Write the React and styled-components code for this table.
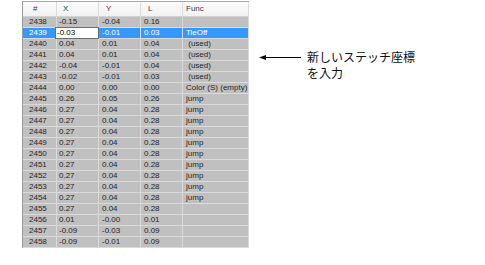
import React from "react";
import styled, { createGlobalStyle } from "styled-components";

const Global = createGlobalStyle`
  html, body { margin: 0; padding: 0; background: #ffffff; }
  body { font-family: "Liberation Sans", Arial, sans-serif; }
`;

const Page = styled.div`
  display: flex;
  align-items: flex-start;
  padding: 1px 0 0 22px;
`;

const Grid = styled.div`
  display: grid;
  grid-template-columns: 34px 42px 42px 42px 66px;
  border-left: 1px solid #9a9a9a;
  border-top: 1px solid #a8a8a8;
  font-size: 8px;
  flex: none;
`;

const HeadCell = styled.div`
  box-sizing: border-box;
  height: 15px;
  line-height: 14px;
  padding-left: ${(p) => p.$pad}px;
  background: linear-gradient(#fbfbfb, #f1f1f1);
  border-right: 1px solid #dcdcdc;
  border-bottom: 1px solid #d2d2d2;
  color: #3a3a3a;
  white-space: pre;
`;

const Cell = styled.div`
  box-sizing: border-box;
  height: 11px;
  line-height: 10px;
  padding-left: ${(p) => p.$pad}px;
  background: ${(p) => (p.$sel ? "#3399ff" : "#c0c0c0")};
  color: ${(p) => (p.$sel ? "#ffffff" : "#262626")};
  border-right: 1px solid #dadada;
  border-bottom: 1px solid #dadada;
  white-space: pre;
  overflow: visible;
`;

const Editor = styled.div`
  box-sizing: border-box;
  width: 44px;
  height: 12px;
  margin: -1px 0 0 -2px;
  padding-left: 1px;
  line-height: 10px;
  background: #ffffff;
  border: 1px solid #6e6e6e;
  color: #000000;
  position: relative;
`;

const Callout = styled.div`
  display: flex;
  align-items: flex-start;
  gap: 6px;
  margin: 48px 0 0 10px;
`;

const Arrow = styled.svg`
  display: block;
  margin-top: 5px;
  flex: none;
`;

const Note = styled.div`
  font-family: "Noto Sans CJK JP", "Noto Sans", sans-serif;
  font-size: 12px;
  line-height: 16px;
  color: #111111;
`;

const cols = [
  { key: "n", head: "#", hp: 10, bp: 6 },
  { key: "x", head: "X", hp: 6, bp: 2 },
  { key: "y", head: "Y", hp: 7, bp: 3 },
  { key: "l", head: "L", hp: 7, bp: 3 },
  { key: "f", head: "Func", hp: 3, bp: 3 },
];

const rows = [
  ["2438", "-0.15", "-0.04", "0.16", ""],
  ["2439", "-0.03", "-0.01", "0.03", "TieOff"],
  ["2440", "0.04", "0.01", "0.04", " (used)"],
  ["2441", "0.04", "0.01", "0.04", " (used)"],
  ["2442", "-0.04", "-0.01", "0.04", " (used)"],
  ["2443", "-0.02", "-0.01", "0.03", " (used)"],
  ["2444", "0.00", "0.00", "0.00", "Color (S) (empty)"],
  ["2445", "0.26", "0.05", "0.26", "jump"],
  ["2446", "0.27", "0.04", "0.28", "jump"],
  ["2447", "0.27", "0.04", "0.28", "jump"],
  ["2448", "0.27", "0.04", "0.28", "jump"],
  ["2449", "0.27", "0.04", "0.28", "jump"],
  ["2450", "0.27", "0.04", "0.28", "jump"],
  ["2451", "0.27", "0.04", "0.28", "jump"],
  ["2452", "0.27", "0.04", "0.28", "jump"],
  ["2453", "0.27", "0.04", "0.28", "jump"],
  ["2454", "0.27", "0.04", "0.28", "jump"],
  ["2455", "0.27", "0.04", "0.28", ""],
  ["2456", "0.01", "-0.00", "0.01", ""],
  ["2457", "-0.09", "-0.03", "0.09", ""],
  ["2458", "-0.09", "-0.01", "0.09", ""],
];

export default function App() {
  return (
    <>
      <Global />
      <Page>
        <Grid>
          {cols.map((c) => (
            <HeadCell key={c.key} $pad={c.hp}>
              {c.head}
            </HeadCell>
          ))}
          {rows.map((r, ri) =>
            r.map((v, ci) => {
              const sel = r[0] === "2439";
              const editing = sel && ci === 1;
              return (
                <Cell key={ri + "-" + ci} $pad={editing ? 0 : cols[ci].bp} $sel={sel}>
                  {editing ? <Editor>{v}</Editor> : v}
                </Cell>
              );
            })
          )}
        </Grid>
        <Callout>
          <Arrow width="42" height="7" viewBox="0 0 42 7">
            <line x1="3" y1="3.5" x2="42" y2="3.5" stroke="#000" strokeWidth="1" />
            <path d="M0 3.5 L7 1 L7 6 Z" fill="#000" />
          </Arrow>
          <Note>
            <div>新しいステッチ座標</div>
            <div>を入力</div>
          </Note>
        </Callout>
      </Page>
    </>
  );
}
